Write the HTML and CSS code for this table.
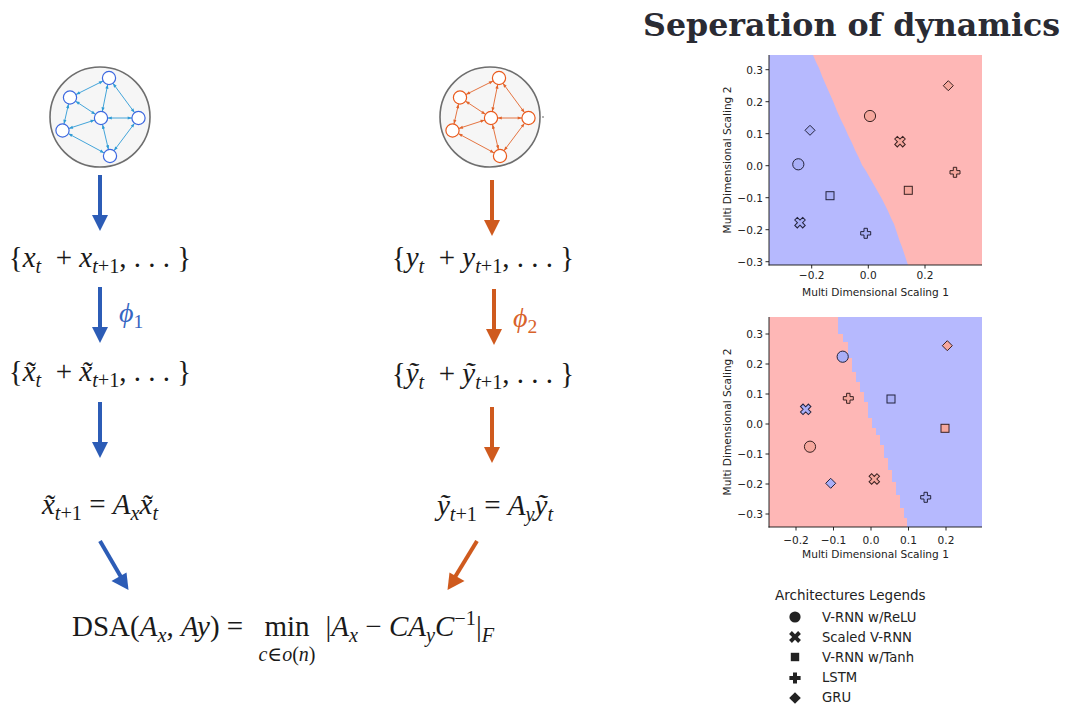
FILE: index.html
```html
<!DOCTYPE html>
<html>
<head>
<meta charset="utf-8">
<link rel="stylesheet" href="styles.css">
</head>
<body>
<main class="page">
  <section class="diagram">
    <div class="cols">
      <div class="col col-x">
        <svg class="net" width="104" height="104" viewBox="0 0 104 104">
          <defs>
            <marker id="ab" markerUnits="userSpaceOnUse" markerWidth="12" markerHeight="4" refX="10.8" refY="1.6" orient="auto-start-reverse" overflow="visible"><path d="M0,0 L4.2,1.6 L0,3.2z" fill="#2f9bd6"/></marker>
          </defs>
          <circle cx="52" cy="52" r="50" fill="#f6f6f6" stroke="#6e6e6e" stroke-width="1.6"/>
          <g stroke="#2f9bd6" stroke-width="0.9" marker-start="url(#ab)" marker-end="url(#ab)">
            <line x1="22" y1="32.5" x2="61" y2="13"/>
            <line x1="61" y1="13" x2="53" y2="53"/>
            <line x1="61" y1="13" x2="90.5" y2="53"/>
            <line x1="22" y1="32.5" x2="53" y2="53"/>
            <line x1="22" y1="32.5" x2="14.5" y2="65.5"/>
            <line x1="14.5" y1="65.5" x2="53" y2="53"/>
            <line x1="53" y1="53" x2="90.5" y2="53"/>
            <line x1="53" y1="53" x2="62" y2="91"/>
            <line x1="14.5" y1="65.5" x2="62" y2="91"/>
            <line x1="62" y1="91" x2="90.5" y2="53"/>
          </g>
          <g fill="#fff" stroke="#3d68e0" stroke-width="1.2">
            <circle cx="61" cy="13" r="6.6"/>
            <circle cx="22" cy="32.5" r="6.6"/>
            <circle cx="53" cy="53" r="6.6"/>
            <circle cx="90.5" cy="53" r="6.6"/>
            <circle cx="14.5" cy="65.5" r="6.6"/>
            <circle cx="62" cy="91" r="6.6"/>
          </g>
        </svg>
        <svg class="arrow a1" width="20" height="56" viewBox="0 0 20 56"><rect x="8" y="0" width="4" height="42" fill="#2c5cb6"/><path d="M2,40 L18,40 L10,56z" fill="#2c5cb6"/></svg>
        <div class="expr e1">{<i>x</i><span class="sb"><i>t</i></span>&nbsp;&nbsp;+ <i>x</i><span class="sb"><i>t</i>+1</span>, . . . }</div>
        <div class="phirow p1">
          <span></span>
          <svg class="arrow" width="20" height="56" viewBox="0 0 20 56"><rect x="8" y="0" width="4" height="42" fill="#2c5cb6"/><path d="M2,40 L18,40 L10,56z" fill="#2c5cb6"/></svg>
          <span class="phi blue"><i>ϕ</i><span class="sb">1</span></span>
        </div>
        <div class="expr e2">{<i>x̃</i><span class="sb"><i>t</i></span>&nbsp;&nbsp;+ <i>x̃</i><span class="sb"><i>t</i>+1</span>, . . . }</div>
        <svg class="arrow a3" width="20" height="56" viewBox="0 0 20 56"><rect x="8" y="0" width="4" height="42" fill="#2c5cb6"/><path d="M2,40 L18,40 L10,56z" fill="#2c5cb6"/></svg>
        <div class="expr eq">
          <i>x̃</i><span class="sb"><i>t</i>+1</span> = <i>A</i><span class="sb"><i>x</i></span><i>x̃</i><span class="sb"><i>t</i></span>
        </div>
      </div>

      <div class="col col-y">
        <svg class="net" width="110" height="104" viewBox="0 0 110 104">
          <defs>
            <marker id="ao" markerUnits="userSpaceOnUse" markerWidth="12" markerHeight="4" refX="10.8" refY="1.6" orient="auto-start-reverse" overflow="visible"><path d="M0,0 L4.2,1.6 L0,3.2z" fill="#e2652c"/></marker>
          </defs>
          <circle cx="52" cy="52" r="50" fill="#f6f6f6" stroke="#6e6e6e" stroke-width="1.6"/>
          <circle cx="105" cy="52" r="0.8" fill="#555"/>
          <g stroke="#e2652c" stroke-width="0.9" marker-start="url(#ao)" marker-end="url(#ao)">
            <line x1="22" y1="32.5" x2="61" y2="13"/>
            <line x1="61" y1="13" x2="53" y2="53"/>
            <line x1="61" y1="13" x2="90.5" y2="53"/>
            <line x1="22" y1="32.5" x2="53" y2="53"/>
            <line x1="22" y1="32.5" x2="14.5" y2="65.5"/>
            <line x1="14.5" y1="65.5" x2="53" y2="53"/>
            <line x1="53" y1="53" x2="90.5" y2="53"/>
            <line x1="53" y1="53" x2="62" y2="91"/>
            <line x1="14.5" y1="65.5" x2="62" y2="91"/>
            <line x1="62" y1="91" x2="90.5" y2="53"/>
          </g>
          <g fill="#fff" stroke="#ea5a1c" stroke-width="1.2">
            <circle cx="61" cy="13" r="6.6"/>
            <circle cx="22" cy="32.5" r="6.6"/>
            <circle cx="53" cy="53" r="6.6"/>
            <circle cx="90.5" cy="53" r="6.6"/>
            <circle cx="14.5" cy="65.5" r="6.6"/>
            <circle cx="62" cy="91" r="6.6"/>
          </g>
        </svg>
        <svg class="arrow a1" width="20" height="56" viewBox="0 0 20 56"><rect x="8" y="0" width="4" height="42" fill="#cf5a1e"/><path d="M2,40 L18,40 L10,56z" fill="#cf5a1e"/></svg>
        <div class="expr e1 shl">{<i>y</i><span class="sb"><i>t</i></span>&nbsp;&nbsp;+ <i>y</i><span class="sb"><i>t</i>+1</span>, . . . }</div>
        <div class="phirow p1">
          <span></span>
          <svg class="arrow" width="20" height="56" viewBox="0 0 20 56"><rect x="8" y="0" width="4" height="42" fill="#cf5a1e"/><path d="M2,40 L18,40 L10,56z" fill="#cf5a1e"/></svg>
          <span class="phi orange"><i>ϕ</i><span class="sb">2</span></span>
        </div>
        <div class="expr e2 shl">{<i>ỹ</i><span class="sb"><i>t</i></span>&nbsp;&nbsp;+ <i>ỹ</i><span class="sb"><i>t</i>+1</span>, . . . }</div>
        <svg class="arrow a3" width="20" height="56" viewBox="0 0 20 56"><rect x="8" y="0" width="4" height="42" fill="#cf5a1e"/><path d="M2,40 L18,40 L10,56z" fill="#cf5a1e"/></svg>
        <div class="expr eq shr">
          <i>ỹ</i><span class="sb"><i>t</i>+1</span> = <i>A</i><span class="sb"><i>y</i></span><i>ỹ</i><span class="sb"><i>t</i></span>
        </div>
      </div>
    </div>

    <svg class="merge" width="600" height="52" viewBox="0 0 600 52">
      <line x1="100" y1="1" x2="121" y2="37" stroke="#2c5cb6" stroke-width="4"/>
      <path d="M111.5,41 L126.5,32.5 L128.5,50z" fill="#2c5cb6"/>
      <line x1="477" y1="1" x2="455" y2="37" stroke="#cf5a1e" stroke-width="4"/>
      <path d="M464.5,41 L449.5,32.5 L447.5,50z" fill="#cf5a1e"/>
    </svg>

    <div class="formula">
      DSA(<i>A</i><span class="sb"><i>x</i></span>, <i>Ay</i>) = <span class="op"><span class="min">min</span><span class="under"><i>c</i>∈<i>o</i>(<i>n</i>)</span></span>|<i>A</i><span class="sb"><i>x</i></span> − <i>CA</i><span class="sb"><i>y</i></span><i>C</i><span class="sp">−1</span>|<span class="sb"><i>F</i></span>
    </div>
  </section>

  <aside class="panel">
    <h1 class="title">Seperation of dynamics</h1>

    <svg class="plot" width="280" height="250" viewBox="0 0 280 250">
      <defs>
        <g id="m-circle"><circle r="5.6"/></g>
        <g id="m-diamond"><polygon points="0,-5 5,0 0,5 -5,0"/></g>
        <g id="m-square"><rect x="-4" y="-4" width="8" height="8"/></g>
        <g id="m-plus"><polygon points="-1.7,-5 1.7,-5 1.7,-1.7 5,-1.7 5,1.7 1.7,1.7 1.7,5 -1.7,5 -1.7,1.7 -5,1.7 -5,-1.7 -1.7,-1.7"/></g>
        <g id="m-x"><polygon transform="rotate(45)" points="-1.8,-5.6 1.8,-5.6 1.8,-1.8 5.6,-1.8 5.6,1.8 1.8,1.8 1.8,5.6 -1.8,5.6 -1.8,1.8 -5.6,1.8 -5.6,-1.8 -1.8,-1.8"/></g>
      </defs>
      <rect x="54" y="5" width="213" height="210" fill="#feb7b6"/>
      <path d="M54,5 L98,5 L101,12 L104,18 L107,26 L110,33 L114,42 L118,51 L122,61 L126,70 L130,78 L133,85 L137,93 L140,100 L144,108 L147,115 L151,121 L155,128 L159,135 L163,142 L167,149 L170,155 L173,161 L176,168 L179,174 L181,180 L183,186 L185,192 L187,197 L189,203 L191,209 L193,215 L54,215 Z" fill="#b6b9fe"/>
      <g class="mk-b">
        <use href="#m-diamond" x="95" y="80.3"/>
        <use href="#m-circle" x="83.3" y="114.3"/>
        <use href="#m-square" x="115" y="145.7"/>
        <use href="#m-x" x="85" y="172.7"/>
        <use href="#m-plus" x="150.7" y="183.3"/>
      </g>
      <g class="mk-r">
        <use href="#m-diamond" x="233.3" y="35.7"/>
        <use href="#m-circle" x="155" y="66"/>
        <use href="#m-x" x="185" y="91.7"/>
        <use href="#m-plus" x="240" y="122.3"/>
        <use href="#m-square" x="193.3" y="140.3"/>
      </g>
      <g class="axis">
        <line x1="54" y1="5" x2="54" y2="215.5"/>
        <line x1="53.5" y1="215" x2="267" y2="215"/>
        <line x1="50.5" y1="19.7" x2="54" y2="19.7"/>
        <line x1="50.5" y1="51.7" x2="54" y2="51.7"/>
        <line x1="50.5" y1="83.7" x2="54" y2="83.7"/>
        <line x1="50.5" y1="115.7" x2="54" y2="115.7"/>
        <line x1="50.5" y1="147.7" x2="54" y2="147.7"/>
        <line x1="50.5" y1="179.7" x2="54" y2="179.7"/>
        <line x1="50.5" y1="211.7" x2="54" y2="211.7"/>
        <line x1="96.7" y1="215" x2="96.7" y2="218.5"/>
        <line x1="153.3" y1="215" x2="153.3" y2="218.5"/>
        <line x1="210" y1="215" x2="210" y2="218.5"/>
      </g>
      <g class="tick ty">
        <text x="48" y="23.5">0.3</text>
        <text x="48" y="55.5">0.2</text>
        <text x="48" y="87.5">0.1</text>
        <text x="48" y="119.5">0.0</text>
        <text x="48" y="151.5">−0.1</text>
        <text x="48" y="183.5">−0.2</text>
        <text x="48" y="215.5">−0.3</text>
      </g>
      <g class="tick tx">
        <text x="96.7" y="229">−0.2</text>
        <text x="153.3" y="229">0.0</text>
        <text x="210" y="229">0.2</text>
      </g>
      <text class="alabel" x="160.5" y="246">Multi Dimensional Scaling 1</text>
      <text class="alabel" transform="translate(15.5,110) rotate(-90)">Multi Dimensional Scaling 2</text>
    </svg>

    <svg class="plot plot2" width="280" height="250" viewBox="0 0 280 250">
      <rect x="54" y="7" width="213" height="210" fill="#b6b9fe"/>
      <path d="M54,7 L123,7 L123,24 L128,24 L128,32 L133,32 L133,48 L137,48 L137,62 L141,62 L141,72 L145,72 L145,82 L149,82 L149,92 L153,92 L153,108 L157,108 L157,118 L161,118 L161,125 L165,125 L165,135 L169,135 L169,148 L173,148 L173,160 L177,160 L177,172 L181,172 L181,185 L185,185 L185,198 L189,198 L189,208 L192,208 L192,217 L54,217 Z" fill="#feb7b6"/>
      <g class="mk-b">
        <use href="#m-circle" x="127.7" y="46.7"/>
        <use href="#m-square" x="176" y="89"/>
        <use href="#m-x" x="90.7" y="99.3"/>
        <use href="#m-diamond" x="115.7" y="173.3"/>
        <use href="#m-plus" x="210.7" y="187.3"/>
      </g>
      <g class="mk-r">
        <use href="#m-diamond" x="232.3" y="35.7"/>
        <use href="#m-plus" x="133.3" y="88.3"/>
        <use href="#m-square" x="230" y="118.3"/>
        <use href="#m-circle" x="95" y="136.7"/>
        <use href="#m-x" x="159.3" y="169"/>
      </g>
      <g class="axis">
        <line x1="54" y1="7" x2="54" y2="217.5"/>
        <line x1="53.5" y1="217" x2="267" y2="217"/>
        <line x1="50.5" y1="24" x2="54" y2="24"/>
        <line x1="50.5" y1="54" x2="54" y2="54"/>
        <line x1="50.5" y1="84" x2="54" y2="84"/>
        <line x1="50.5" y1="114" x2="54" y2="114"/>
        <line x1="50.5" y1="144" x2="54" y2="144"/>
        <line x1="50.5" y1="174" x2="54" y2="174"/>
        <line x1="50.5" y1="204" x2="54" y2="204"/>
        <line x1="81" y1="217" x2="81" y2="220.5"/>
        <line x1="118.5" y1="217" x2="118.5" y2="220.5"/>
        <line x1="156" y1="217" x2="156" y2="220.5"/>
        <line x1="193.5" y1="217" x2="193.5" y2="220.5"/>
        <line x1="231" y1="217" x2="231" y2="220.5"/>
      </g>
      <g class="tick ty">
        <text x="48" y="27.8">0.3</text>
        <text x="48" y="57.8">0.2</text>
        <text x="48" y="87.8">0.1</text>
        <text x="48" y="117.8">0.0</text>
        <text x="48" y="147.8">−0.1</text>
        <text x="48" y="177.8">−0.2</text>
        <text x="48" y="207.8">−0.3</text>
      </g>
      <g class="tick tx">
        <text x="81" y="234">−0.2</text>
        <text x="118.5" y="234">−0.1</text>
        <text x="156" y="234">0.0</text>
        <text x="193.5" y="234">0.1</text>
        <text x="231" y="234">0.2</text>
      </g>
      <text class="alabel" x="160.5" y="248">Multi Dimensional Scaling 1</text>
      <text class="alabel" transform="translate(15.5,112) rotate(-90)">Multi Dimensional Scaling 2</text>
    </svg>

    <div class="legend">
      <div class="legend-title">Architectures Legends</div>
      <ul class="legend-list">
        <li><svg width="16" height="16" viewBox="-8 -8 16 16"><circle r="5.6"/></svg><span>V-RNN w/ReLU</span></li>
        <li><svg width="16" height="16" viewBox="-8 -8 16 16"><polygon transform="rotate(45)" points="-2,-6.4 2,-6.4 2,-2 6.4,-2 6.4,2 2,2 2,6.4 -2,6.4 -2,2 -6.4,2 -6.4,-2 -2,-2"/></svg><span>Scaled V-RNN</span></li>
        <li><svg width="16" height="16" viewBox="-8 -8 16 16"><rect x="-4.2" y="-4.2" width="8.4" height="8.4"/></svg><span>V-RNN w/Tanh</span></li>
        <li><svg width="16" height="16" viewBox="-8 -8 16 16"><polygon points="-2,-5.6 2,-5.6 2,-2 5.6,-2 5.6,2 2,2 2,5.6 -2,5.6 -2,2 -5.6,2 -5.6,-2 -2,-2"/></svg><span>LSTM</span></li>
        <li><svg width="16" height="16" viewBox="-8 -8 16 16"><polygon points="0,-5.8 5.8,0 0,5.8 -5.8,0"/></svg><span>GRU</span></li>
      </ul>
    </div>
  </aside>
</main>
</body>
</html>
```
FILE: styles.css
```css
html, body {
  margin: 0;
  padding: 0;
  background: #ffffff;
}

.page {
  display: flex;
  width: 1071px;
  height: 718px;
  overflow: hidden;
  font-family: "Liberation Serif", "DejaVu Serif", serif;
  color: #1a1a1a;
}

/* ---------- left diagram ---------- */
.diagram {
  width: 640px;
  flex: none;
  display: flex;
  flex-direction: column;
}

.cols {
  display: grid;
  grid-template-columns: 200px 200px;
  column-gap: 190px;
}

.col {
  display: flex;
  flex-direction: column;
  align-items: center;
}

.net {
  display: block;
  margin-top: 65px;
}

.col-y .net {
  margin-left: 6px;
}

.arrow {
  display: block;
}

.col-x .a1 { margin-top: 6px; }
.col-y .a1 { margin-top: 11px; margin-left: 4px; }

.expr {
  height: 40px;
  line-height: 40px;
  font-size: 29px;
  white-space: nowrap;
}

.expr i, .formula i, .phi i {
  font-style: italic;
}

.sb {
  font-size: 0.7em;
  vertical-align: -0.3em;
  line-height: 0;
}

.sp {
  font-size: 0.7em;
  vertical-align: 0.55em;
  line-height: 0;
}

.col-x .e1 { margin-top: 6px; }
.col-y .e1 { margin-top: 1px; }

.shl { margin-right: 14px; }
.shr { margin-left: 10px; }

.phirow {
  display: grid;
  grid-template-columns: 1fr 20px 1fr;
  width: 200px;
  align-items: center;
}

.col-x .p1 { margin-top: 10px; }
.col-y .p1 { margin-top: 12px; }
.col-y .p1 .arrow { margin-left: 4px; }

.phi {
  font-size: 28px;
  line-height: 30px;
  padding-left: 9px;
  padding-bottom: 4px;
}

.col-y .phi { padding-left: 13px; padding-top: 6px; }

.phi.blue { color: #3565c2; }
.phi.orange { color: #d8622a; }

.col-x .e2 { margin-top: 8px; }
.col-y .e2 { margin-top: 8px; }

.col-x .a3 { margin-top: 11px; }
.col-y .a3 { margin-top: 14px; margin-left: 4px; }

.col-x .eq { margin-top: 26px; }
.col-y .eq { margin-top: 22px; }

.merge {
  display: block;
  margin-top: 15px;
}

.formula {
  margin-top: 14px;
  padding-left: 72px;
  font-size: 29px;
  line-height: 40px;
  white-space: nowrap;
}

.op {
  display: inline-flex;
  flex-direction: column;
  align-items: center;
  vertical-align: baseline;
  margin: 0 10px 0 8px;
}

.op .min {
  line-height: 36px;
}

.op .under {
  font-size: 20px;
  line-height: 18px;
  margin-top: 1px;
}

/* ---------- right panel ---------- */
.panel {
  width: 431px;
  flex: none;
  display: flex;
  flex-direction: column;
}

.title {
  margin: 0;
  height: 50px;
  line-height: 50px;
  padding-left: 3px;
  font-family: "DejaVu Serif", "Liberation Serif", serif;
  font-weight: bold;
  font-size: 31.7px;
  color: #2a2b33;
  white-space: nowrap;
}

.plot {
  display: block;
  margin-left: 75px;
  font-family: "DejaVu Sans", sans-serif;
}

.plot2 {
  margin-top: 10px;
}

.mk-b {
  fill: #a9aff7;
  stroke: #23233c;
  stroke-width: 1;
}

.mk-r {
  fill: #f6a79d;
  stroke: #3a2222;
  stroke-width: 1;
}

.axis line {
  stroke: #111;
  stroke-width: 0.9;
}

.tick text {
  font-size: 10.6px;
  fill: #222;
}

.ty text { text-anchor: end; }
.tx text { text-anchor: middle; }

.alabel {
  font-size: 10.6px;
  fill: #222;
  text-anchor: middle;
}

.legend {
  margin-top: 25px;
  margin-left: 135px;
  font-family: "DejaVu Sans", sans-serif;
  color: #222;
}

.legend-title {
  font-size: 13.5px;
  height: 22px;
  line-height: 20px;
}

.legend-list {
  list-style: none;
  margin: 0;
  padding: 0;
}

.legend-list li {
  display: flex;
  align-items: center;
  height: 20.2px;
  font-size: 13.2px;
}

.legend-list svg {
  display: block;
  margin-left: 12px;
  margin-right: 19px;
  fill: #222;
}
```
